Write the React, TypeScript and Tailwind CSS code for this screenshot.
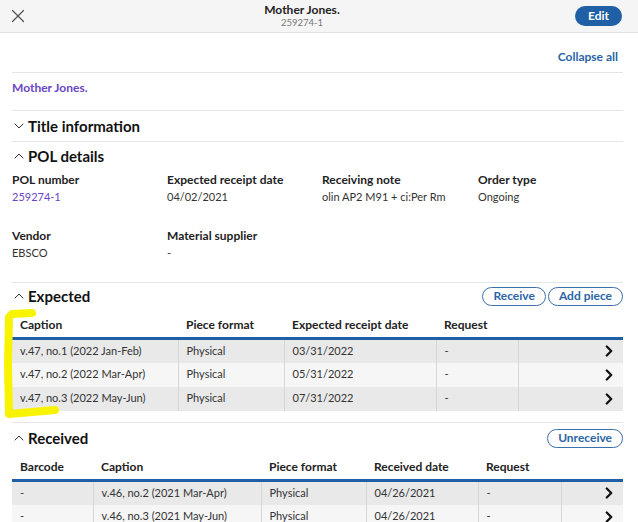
import { X, ChevronUp, ChevronDown, ChevronRight } from 'lucide-react';

const expected = [
  { caption: 'v.47, no.1 (2022 Jan-Feb)', format: 'Physical', date: '03/31/2022', request: '-' },
  { caption: 'v.47, no.2 (2022 Mar-Apr)', format: 'Physical', date: '05/31/2022', request: '-' },
  { caption: 'v.47, no.3 (2022 May-Jun)', format: 'Physical', date: '07/31/2022', request: '-' },
];

const received = [
  { barcode: '-', caption: 'v.46, no.2 (2021 Mar-Apr)', format: 'Physical', date: '04/26/2021', request: '-' },
  { barcode: '-', caption: 'v.46, no.3 (2021 May-Jun)', format: 'Physical', date: '04/26/2021', request: '-' },
];

function SectionTitle({ open, children }: { open: boolean; children: React.ReactNode }) {
  const Icon = open ? ChevronUp : ChevronDown;
  return (
    <div className="flex items-center h-[20px]">
      <Icon className="w-[16px] h-[16px] text-[#333] -ml-[1px]" strokeWidth={1.5} />
      <span className="text-[15px] leading-[20px] font-bold text-[#111] ml-[1px]">{children}</span>
    </div>
  );
}

function Field({ label, value, link }: { label: string; value: string; link?: boolean }) {
  return (
    <div className="flex flex-col">
      <span className="text-[12px] font-bold text-[#222] leading-[17px]">{label}</span>
      <span className={`text-[11px] leading-[17px] ${link ? 'text-[#6a45c6]' : 'text-[#333]'}`}>{value}</span>
    </div>
  );
}

function PillButton({ children }: { children: React.ReactNode }) {
  return (
    <button className="h-[19px] px-[10px] rounded-full border border-[#3a70ad] text-[12px] font-bold text-[#2a65a6] leading-none bg-white">
      {children}
    </button>
  );
}

function RowChevron() {
  return (
    <div className="flex justify-end">
      <ChevronRight className="w-[18px] h-[18px] text-[#111] -mr-[4px]" strokeWidth={3} />
    </div>
  );
}

export default function App() {
  return (
    <div className="relative w-[638px] h-[522px] overflow-hidden bg-white font-['Lato',sans-serif] text-[#333]">
      {/* header */}
      <div className="h-[33px] bg-[#f5f5f5] border-b border-[#e2e2e2] flex items-center justify-between pl-[7px] pr-[16px]">
        <X className="w-[22px] h-[22px] text-[#555]" strokeWidth={1.4} />
        <div className="flex flex-col items-center leading-none -mt-[1px]">
          <span className="text-[12px] font-bold text-[#222]">Mother Jones.</span>
          <span className="text-[9.5px] text-[#777] mt-[2px]">259274-1</span>
        </div>
        <button className="h-[20px] px-[13px] rounded-full bg-[#1f5fa5] text-white text-[12px] font-bold">Edit</button>
      </div>

      <div className="pl-[12px] pr-[15px]">
        <div className="h-[40px] flex items-end justify-end pb-[8px] border-b border-[#e5e5e5]">
          <span className="text-[12px] leading-[14px] font-bold text-[#2a65a6] pr-[5px]">Collapse all</span>
        </div>

        <div className="h-[38px] flex items-center pb-[8px] border-b border-[#e5e5e5]">
          <span className="text-[12px] leading-[14px] font-bold text-[#6a45c6]">Mother Jones.</span>
        </div>

        <div className="h-[31px] flex items-center border-b border-[#e5e5e5]">
          <SectionTitle open={false}>Title information</SectionTitle>
        </div>

        <div className="h-[141px] border-b border-[#e5e5e5] pt-[4px]">
          <SectionTitle open>POL details</SectionTitle>
          <div className="grid grid-cols-[155px_155px_156px_1fr] mt-[5px] gap-y-[22px]">
            <Field label="POL number" value="259274-1" link />
            <Field label="Expected receipt date" value="04/02/2021" />
            <Field label="Receiving note" value="olin AP2 M91 + ci:Per Rm" />
            <Field label="Order type" value="Ongoing" />
            <Field label="Vendor" value="EBSCO" />
            <Field label="Material supplier" value="-" />
          </div>
        </div>

        <div className="h-[140px] border-b border-[#e5e5e5] pt-[3px]">
          <div className="flex items-center justify-between h-[20px]">
            <SectionTitle open>Expected</SectionTitle>
            <div className="flex gap-[2px]">
              <PillButton>Receive</PillButton>
              <PillButton>Add piece</PillButton>
            </div>
          </div>
          <table className="w-full mt-[11px] border-collapse text-[11px]">
            <thead>
              <tr className="border-b-[3px] border-[#1f5fa5] text-left text-[#222] text-[12px] leading-[16px]">
                <th className="w-[166px] font-bold pl-[8px] pb-[4px]">Caption</th>
                <th className="w-[106px] font-bold pl-[8px] pb-[4px]">Piece format</th>
                <th className="w-[152px] font-bold pl-[8px] pb-[4px]">Expected receipt date</th>
                <th className="w-[82px] font-bold pl-[8px] pb-[4px]">Request</th>
                <th></th>
              </tr>
            </thead>
            <tbody>
              {expected.map((r, i) => (
                <tr key={i} className={`h-[24px] ${i % 2 === 0 ? 'bg-[#e9e9e9]' : 'bg-[#f6f6f6]'}`}>
                  <td className="pl-[8px] border-r border-[#d6d6d6]">{r.caption}</td>
                  <td className="pl-[8px] border-r border-[#d6d6d6]">{r.format}</td>
                  <td className="pl-[8px] border-r border-[#d6d6d6]">{r.date}</td>
                  <td className="pl-[8px] border-r border-[#d6d6d6]">{r.request}</td>
                  <td className="pr-[9px]">
                    <RowChevron />
                  </td>
                </tr>
              ))}
            </tbody>
          </table>
        </div>

        <div className="pt-[5px]">
          <div className="flex items-center justify-between h-[20px]">
            <SectionTitle open>Received</SectionTitle>
            <PillButton>Unreceive</PillButton>
          </div>
          <table className="w-full mt-[11px] border-collapse text-[11px]">
            <thead>
              <tr className="border-b-[3px] border-[#1f5fa5] text-left text-[#222] text-[12px] leading-[16px]">
                <th className="w-[81px] font-bold pl-[8px] pb-[4px]">Barcode</th>
                <th className="w-[168px] font-bold pl-[8px] pb-[4px]">Caption</th>
                <th className="w-[105px] font-bold pl-[8px] pb-[4px]">Piece format</th>
                <th className="w-[112px] font-bold pl-[8px] pb-[4px]">Received date</th>
                <th className="w-[83px] font-bold pl-[8px] pb-[4px]">Request</th>
                <th></th>
              </tr>
            </thead>
            <tbody>
              {received.map((r, i) => (
                <tr key={i} className={`h-[24px] ${i % 2 === 0 ? 'bg-[#e9e9e9]' : 'bg-[#f6f6f6]'}`}>
                  <td className="pl-[8px] border-r border-[#d6d6d6]">{r.barcode}</td>
                  <td className="pl-[8px] border-r border-[#d6d6d6]">{r.caption}</td>
                  <td className="pl-[8px] border-r border-[#d6d6d6]">{r.format}</td>
                  <td className="pl-[8px] border-r border-[#d6d6d6]">{r.date}</td>
                  <td className="pl-[8px] border-r border-[#d6d6d6]">{r.request}</td>
                  <td className="pr-[9px]">
                    <RowChevron />
                  </td>
                </tr>
              ))}
            </tbody>
          </table>
        </div>
      </div>

      {/* yellow highlighter mark over the expected captions */}
      <svg className="absolute left-0 top-[305px] pointer-events-none" width="60" height="118" viewBox="0 0 60 118">
        <path d="M32 8 L12 9 L9 12 L8 60 L9 109 L55 105" fill="none" stroke="#f8f400" strokeWidth="8" strokeLinecap="round" strokeLinejoin="round" />
      </svg>
    </div>
  );
}
